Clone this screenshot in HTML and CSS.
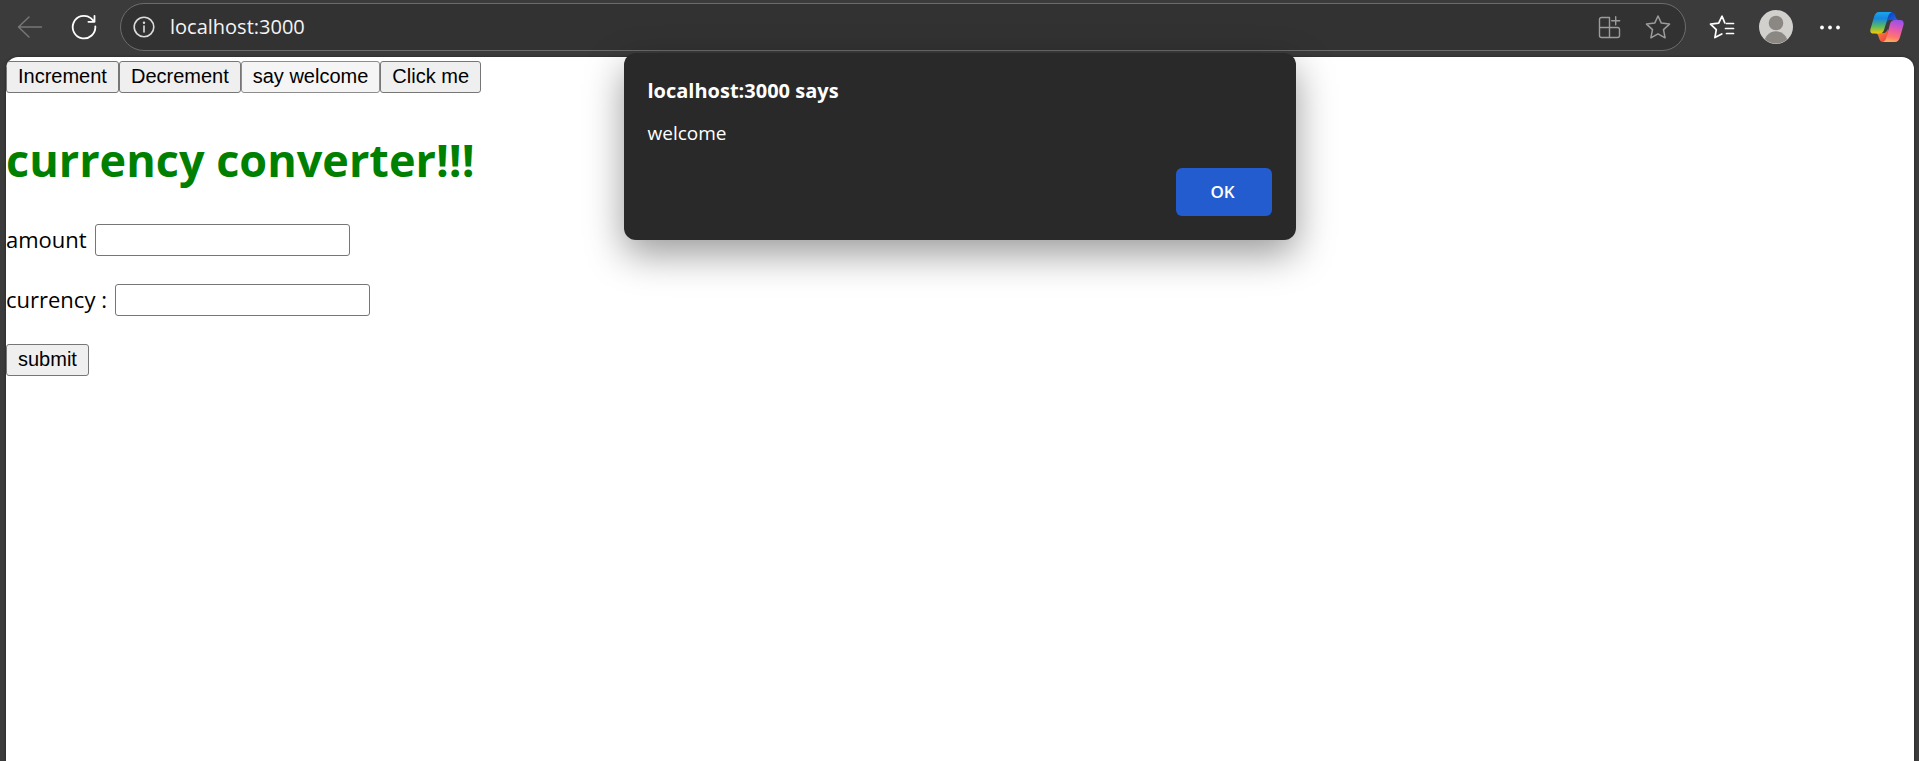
FILE: index.html
```html
<!DOCTYPE html>
<html lang="en">
<head>
<meta charset="utf-8">
<meta name="viewport" content="width=device-width, initial-scale=1">
<title>currency converter</title>
<link rel="stylesheet" href="styles.css">
</head>
<body>
<header class="toolbar">
  <button class="tool tool-muted" type="button" aria-label="Back" disabled>
    <svg width="26" height="26" viewBox="0 0 26 26" fill="none" stroke="currentColor" stroke-width="1.5" stroke-linecap="round" stroke-linejoin="round"><path d="M12 3 1.500 13 12 23M1.500 13H24.500"/></svg>
  </button>
  <button class="tool" type="button" aria-label="Refresh">
    <svg width="26" height="26" viewBox="0 0 26 26" fill="none" stroke="currentColor" stroke-width="1.8" stroke-linecap="round" stroke-linejoin="round"><path d="M24.300 12.300A11.300 11.300 0 1 1 19.800 4.100L23.500 7.800M23.500 1.800V7.800H17.400"/></svg>
  </button>
  <div class="address">
    <button class="site-info" type="button" aria-label="View site information">
      <svg width="24" height="24" viewBox="0 0 24 24" fill="none" stroke="currentColor" stroke-width="1.6"><circle cx="12" cy="12" r="9.800"/><path d="M12 11V17" stroke-linecap="round"/><circle cx="12" cy="7.800" r="1.200" fill="currentColor" stroke="none"/></svg>
    </button>
    <input class="address-input" type="text" aria-label="Address" value="localhost:3000" spellcheck="false">
    <button class="tool tool-soft" type="button" aria-label="App available">
      <svg width="24" height="24" viewBox="0 0 24 24" fill="none" stroke="currentColor" stroke-width="1.400" stroke-linecap="round" stroke-linejoin="round"><path d="M11.500 2.500H3.500A2 2 0 0 0 1.500 4.500V20.500A2 2 0 0 0 3.500 22.500H19.500A2 2 0 0 0 21.500 20.500V14.500A2 2 0 0 0 19.500 12.500H1.500M11.500 22.500V2.500M17.700 1.800V9.800M13.700 5.800H21.700"/></svg>
    </button>
    <button class="tool tool-soft" type="button" aria-label="Add to favorites">
      <svg width="26" height="26" viewBox="0 0 26 26" fill="none" stroke="currentColor" stroke-width="1.500" stroke-linejoin="round"><path d="M13 2 16.300 9.100 24.500 10.100 18.500 15.600 20.100 23.800 13 19.800 5.900 23.800 7.500 15.600 1.500 10.100 9.700 9.100Z"/></svg>
    </button>
  </div>
  <div class="tools">
    <button class="tool" type="button" aria-label="Favorites">
      <svg width="26" height="26" viewBox="0 0 26 26" fill="none" stroke="currentColor" stroke-width="1.700" stroke-linecap="round" stroke-linejoin="round"><path d="M15.800 8.800 13 2.200 9.700 9.200 1.500 10.200 7.300 15.700 5.900 23.600 12.800 20M17.500 9.500H24.500M16.500 14.500H24.500M17.500 19.500H24.500"/></svg>
    </button>
    <button class="tool" type="button" aria-label="Profile">
      <svg width="34" height="34" viewBox="0 0 34 34"><defs><clipPath id="face"><circle cx="17" cy="17" r="16.500"/></clipPath></defs><circle cx="17" cy="17" r="17" fill="#d2d0cd"/><g clip-path="url(#face)" fill="#8b8884"><circle cx="17" cy="13" r="7.300"/><circle cx="17" cy="33" r="11.700"/></g></svg>
    </button>
    <button class="tool" type="button" aria-label="Settings and more">
      <svg width="24" height="24" viewBox="0 0 24 24" fill="currentColor"><circle cx="4" cy="12.500" r="1.900"/><circle cx="12" cy="12.500" r="1.900"/><circle cx="20" cy="12.500" r="1.900"/></svg>
    </button>
  </div>
  <button class="tool" type="button" aria-label="Copilot">
    <svg width="34" height="30" viewBox="0 0 34 30">
      <defs>
        <linearGradient id="cool" x1="0" y1="0" x2="0" y2="1"><stop offset="0" stop-color="#18a5f0"/><stop offset=".3" stop-color="#1687dc"/><stop offset=".65" stop-color="#55b76a"/><stop offset="1" stop-color="#f3cb00"/></linearGradient>
        <linearGradient id="warm" x1=".6" y1="0" x2=".4" y2="1"><stop offset="0" stop-color="#9a50ef"/><stop offset=".45" stop-color="#e95aaa"/><stop offset=".75" stop-color="#ff7470"/><stop offset="1" stop-color="#ffad57"/></linearGradient>
        <linearGradient id="fold" x1="0" y1="0" x2="1" y2="1"><stop offset="0" stop-color="#0835ba"/><stop offset="1" stop-color="#2877e8"/></linearGradient>
        <linearGradient id="tail" x1="0" y1="0" x2="1" y2="1"><stop offset="0" stop-color="#ff9a28"/><stop offset="1" stop-color="#e9374c"/></linearGradient>
      </defs>
      <path fill="url(#fold)" d="M17 0H21Q24 0 25 3L26 6Q27 8 29 8H20Q17 8 16 12Z"/>
      <path fill="url(#tail)" d="M17 30H13Q10 30 9 26L8 23Q7 21 5 21H14Q16 21 18 17Z"/>
      <path fill="url(#cool)" d="M9 0H22Q19 1 18 5L14 18Q13 21.500 9 21.500H4Q-.7 21.500.5 17L4 5Q5.500 0 9 0Z"/>
      <path fill="url(#warm)" d="M25 30H13Q15.500 29 16.500 25L20 12Q21 8 25 8H30Q34.500 8 33.500 13L30 25Q28.700 30 25 30Z"/>
    </svg>
  </button>
</header>

<main class="page">
  <div class="actions">
    <button class="btn" type="button">Increment</button>
    <button class="btn" type="button">Decrement</button>
    <button class="btn btn-active" type="button">say welcome</button>
    <button class="btn" type="button">Click me</button>
  </div>
  <h1 class="title">currency converter!!!</h1>
  <form class="converter">
    <div class="field">
      <label for="amount">amount</label>
      <input class="text-input" id="amount" type="text">
    </div>
    <div class="field">
      <label for="currency">currency :</label>
      <input class="text-input" id="currency" type="text">
    </div>
    <button class="btn" type="button">submit</button>
  </form>
</main>

<dialog class="alert" open aria-labelledby="alert-title">
  <h2 class="alert-title" id="alert-title">localhost:3000 says</h2>
  <p class="alert-text">welcome</p>
  <button class="alert-ok" type="button">OK</button>
</dialog>
</body>
</html>
```

FILE: styles.css
```css
* {
  box-sizing: border-box;
}

body {
  margin: 0;
  min-height: 100vh;
  display: flex;
  flex-direction: column;
  background: #3b3b3b;
  font-family: "Open Sans", "Noto Sans", sans-serif;
  color: #000;
}

button,
input {
  margin: 0;
  font: inherit;
}

svg {
  display: block;
}

/* Browser toolbar */
.toolbar {
  display: flex;
  align-items: center;
  gap: 6px;
  padding: 3px 8px 6px 6px;
}

.tool,
.site-info {
  display: grid;
  place-items: center;
  flex: none;
  width: 48px;
  height: 46px;
  padding: 0;
  border: 0;
  background: none;
  color: #fff;
}

.tool-muted {
  color: #777;
}

.tool-soft {
  color: #9c9c9c;
}

.site-info {
  width: 46px;
  color: #dcdcdc;
}

.address {
  flex: 1;
  display: flex;
  align-items: center;
  min-width: 0;
  margin: 0 6px;
  padding-right: 3px;
  border: 1px solid #6c6c6c;
  border-radius: 24px;
  background: #323232;
}

.address-input {
  flex: 1;
  min-width: 0;
  padding: 0 3px;
  border: 0;
  outline: 0;
  background: none;
  color: #f4f4f4;
  font-size: 20px;
  line-height: 28px;
}

.tools {
  display: flex;
  gap: 6px;
  margin-right: 3px;
}

/* Web page */
.page {
  flex: 1;
  margin: 0 5px 0 6px;
  padding-top: 4px;
  overflow: hidden;
  border-radius: 12px 12px 0 0;
  background: #fff;
  box-shadow: 0 0 3px rgba(0, 0, 0, 0.4);
}

.actions {
  display: flex;
}

.btn {
  height: 32px;
  padding: 0 11px 2px;
  border: 1px solid #767676;
  border-radius: 3px;
  background: #efefef;
  color: #000;
  font-family: "Liberation Sans", Arial, sans-serif;
  font-size: 20px;
  line-height: 28px;
}

.btn-active {
  border-color: #8d8d8d;
  background: #f5f5f5;
}

.title {
  margin: 35px 0 32px;
  color: #008000;
  font-size: 45px;
  font-weight: 700;
  line-height: 64px;
}

.converter {
  display: flex;
  flex-direction: column;
  align-items: flex-start;
  gap: 28px;
}

.field {
  display: flex;
  align-items: flex-start;
  gap: 8px;
  font-size: 22px;
  line-height: 30px;
}

.text-input {
  width: 255px;
  height: 32px;
  padding: 0 4px;
  border: 1px solid #767676;
  border-radius: 3px;
  background: #fff;
  font-family: "Liberation Sans", Arial, sans-serif;
  font-size: 20px;
}

/* Alert over the page */
.alert {
  position: absolute;
  top: 53px;
  right: 0;
  left: 0;
  display: flex;
  flex-direction: column;
  width: 672px;
  max-width: 100%;
  margin: 0 auto;
  padding: 24px;
  border: 0;
  border-radius: 12px;
  background: #292929;
  box-shadow: 0 14px 38px rgba(0, 0, 0, 0.4);
  color: #fff;
}

.alert-title {
  margin: 0 0 14px;
  font-size: 20px;
  font-weight: 700;
  line-height: 28px;
}

.alert-text {
  margin: 0 0 21px;
  font-size: 19px;
  line-height: 28px;
}

.alert-ok {
  align-self: flex-end;
  width: 96px;
  height: 48px;
  padding: 0 2px 2px 0;
  border: 0;
  border-radius: 6px;
  background: #235ccf;
  color: #fff;
  font-size: 17px;
  font-weight: 600;
}
```
